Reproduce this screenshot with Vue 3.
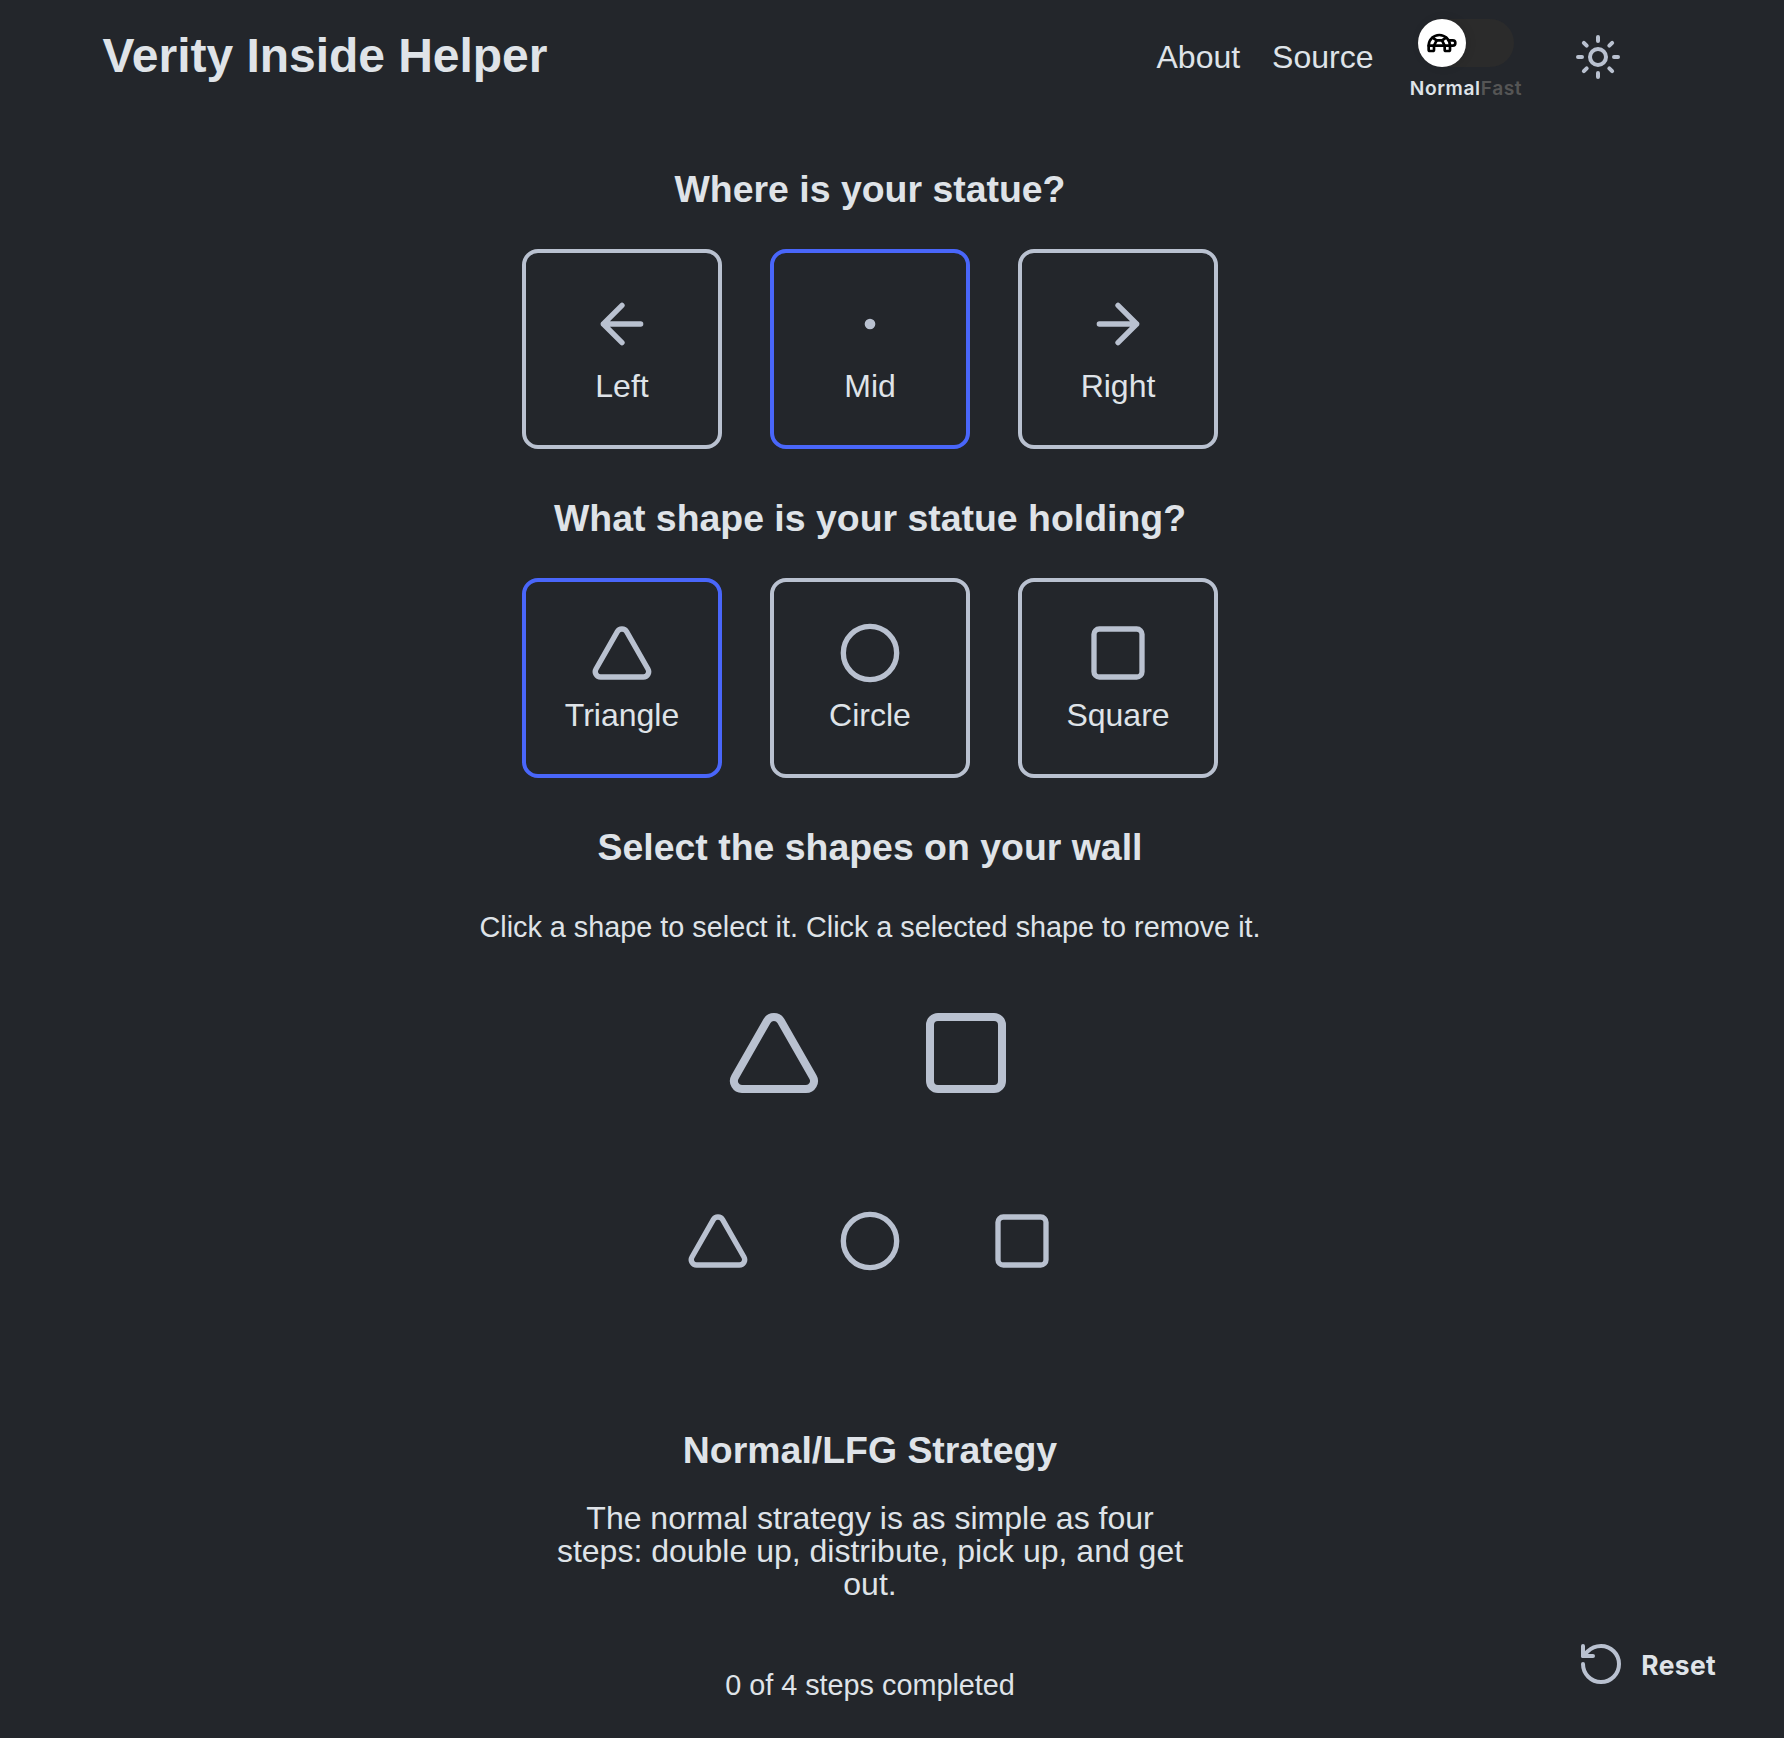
<script setup>
import { ref } from 'vue'

const positions = [
  { name: 'Left', icon: 'left' },
  { name: 'Mid', icon: 'dot' },
  { name: 'Right', icon: 'right' },
]
const shapes = [
  { name: 'Triangle', icon: 'triangle' },
  { name: 'Circle', icon: 'circle' },
  { name: 'Square', icon: 'square' },
]
const paths = {
  left: 'm12 19-7-7 7-7M19 12H5',
  right: 'M5 12h14m-7-7 7 7-7 7',
  dot: 'M11 12a1 1 0 1 0 2 0a1 1 0 1 0-2 0z',
  triangle: 'M13.73 4a2 2 0 0 0-3.48 0l-8 14A2 2 0 0 0 4 21h16a2 2 0 0 0 1.73-3Z',
  circle: 'M2 12a10 10 0 1 0 20 0a10 10 0 1 0-20 0z',
  square: 'M5 3h14a2 2 0 0 1 2 2v14a2 2 0 0 1-2 2H5a2 2 0 0 1-2-2V5a2 2 0 0 1 2-2z',
}
const position = ref('Mid')
const held = ref('Triangle')
const wall = ['triangle', 'square']
</script>

<template>
  <div class="page">
    <header class="header">
      <h1>Verity Inside Helper</h1>
      <nav class="nav">
        <a>About</a>
        <a>Source</a>
      </nav>
      <div class="speed">
        <div class="track">
          <div class="knob">
            <svg class="icon turtle" viewBox="0 0 24 24">
              <path d="m12 10 2 4v3a1 1 0 0 0 1 1h2a1 1 0 0 0 1-1v-3a8 8 0 1 0-16 0v3a1 1 0 0 0 1 1h2a1 1 0 0 0 1-1v-3l2-4h4Z" />
              <path d="M4.82 7.9 8 10M15.18 7.9 12 10M16.93 10H20a2 2 0 0 1 0 4H2" />
            </svg>
          </div>
        </div>
        <div class="labels"><span>Normal</span><span class="off">Fast</span></div>
      </div>
      <svg class="icon sun" viewBox="0 0 24 24">
        <circle cx="12" cy="12" r="4" />
        <path d="M12 2v2M12 20v2M4.93 4.93l1.41 1.41M17.66 17.66l1.41 1.41M2 12h2M20 12h2M6.34 17.66l-1.41 1.41M19.07 4.93l-1.41 1.41" />
      </svg>
    </header>

    <main>
      <section>
        <h2>Where is your statue?</h2>
        <div class="cards">
          <button v-for="p in positions" :key="p.name" class="card" :class="{ active: position === p.name }" @click="position = p.name">
            <svg class="icon small" viewBox="0 0 24 24"><path :d="paths[p.icon]" /></svg>
            <span>{{ p.name }}</span>
          </button>
        </div>
      </section>

      <section>
        <h2>What shape is your statue holding?</h2>
        <div class="cards">
          <button v-for="s in shapes" :key="s.name" class="card" :class="{ active: held === s.name }" @click="held = s.name">
            <svg class="icon small" viewBox="0 0 24 24"><path :d="paths[s.icon]" /></svg>
            <span>{{ s.name }}</span>
          </button>
        </div>
      </section>

      <section>
        <h2>Select the shapes on your wall</h2>
        <p class="hint">Click a shape to select it. Click a selected shape to remove it.</p>
        <div class="wall">
          <svg v-for="w in wall" :key="w" class="icon large" viewBox="0 0 24 24"><path :d="paths[w]" /></svg>
        </div>
        <div class="choices">
          <svg v-for="s in shapes" :key="s.name" class="icon small" viewBox="0 0 24 24"><path :d="paths[s.icon]" /></svg>
        </div>
      </section>

      <section class="strategy">
        <h2>Normal/LFG Strategy</h2>
        <p>The normal strategy is as simple as four steps: double up, distribute, pick up, and get out.</p>
      </section>
    </main>

    <footer class="footer">
      <p class="progress">0 of 4 steps completed</p>
      <button class="reset">
        <svg class="icon" viewBox="0 0 24 24">
          <path d="M3 12a9 9 0 1 0 9-9 9.75 9.75 0 0 0-6.74 2.74L3 8" />
          <path d="M3 3v5h5" />
        </svg>
        <span>Reset</span>
      </button>
    </footer>
  </div>
</template>

<style>
body {
  margin: 0;
  background: #23262b;
}
</style>

<style scoped>
.page {
  box-sizing: border-box;
  width: 1740px;
  height: 1738px;
  font-family: "Liberation Sans", Helvetica, Arial, sans-serif;
  font-size: 32px;
  color: #dfe3e8;
}
h1, h2, p {
  margin: 0;
}
button {
  padding: 0;
  border: 0;
  background: none;
  color: inherit;
  font: inherit;
}
.icon {
  display: block;
  flex: none;
  width: 48px;
  height: 48px;
  fill: none;
  stroke: #b9c1d0;
  stroke-width: 2;
  stroke-linecap: round;
  stroke-linejoin: round;
}
.icon.small {
  width: 64px;
  height: 64px;
}
.icon.large {
  width: 96px;
  height: 96px;
}
.header {
  display: flex;
  align-items: flex-start;
  box-sizing: border-box;
  height: 120px;
  padding: 19px 118px 0 102.5px;
}
h1 {
  margin-top: 9px;
  font-size: 48px;
  line-height: 56px;
  letter-spacing: -0.03px;
}
.nav {
  display: flex;
  gap: 32px;
  margin-top: 20px;
  margin-left: auto;
  line-height: 36px;
}
.speed {
  display: flex;
  flex-direction: column;
  align-items: center;
  width: 120px;
  margin-left: 32.5px;
}
.track {
  width: 96px;
  height: 48px;
  border-radius: 24px;
  background: #2b2b2b;
}
.knob {
  display: flex;
  align-items: center;
  justify-content: center;
  width: 48px;
  height: 48px;
  border-radius: 50%;
  background: #fff;
  box-shadow: 2px 0 10px rgba(0, 0, 0, 0.1);
}
.icon.turtle {
  width: 32px;
  height: 32px;
  stroke: #000;
}
.labels {
  margin-top: 9px;
  font: 600 19.2px/24px Inter, sans-serif;
  letter-spacing: 0.58px;
}
.off {
  color: #555;
}
.sun {
  margin-top: 14px;
  margin-left: 48px;
}
section {
  display: flex;
  flex-direction: column;
  align-items: center;
  padding-top: 47px;
}
h2 {
  font-size: 37.44px;
  line-height: 44px;
}
.cards {
  display: flex;
  gap: 48px;
  margin-top: 38px;
}
.card {
  display: flex;
  flex-direction: column;
  align-items: center;
  gap: 12px;
  box-sizing: border-box;
  width: 200px;
  height: 200px;
  padding-top: 39px;
  border: 4px solid #b9c1d0;
  border-radius: 16px;
  line-height: 36px;
}
.card.active {
  border-color: #4966fa;
}
.hint {
  margin-top: 41px;
  font-size: 28.8px;
  line-height: 34px;
}
.wall {
  display: flex;
  gap: 96px;
  margin-top: 61px;
}
.choices {
  display: flex;
  gap: 88px;
  margin-top: 108px;
}
.strategy {
  padding-top: 155px;
}
.strategy p {
  width: 640px;
  margin-top: 30px;
  line-height: 33px;
  text-align: center;
}
.footer {
  display: grid;
  grid-template-columns: 1fr auto 1fr;
  height: 62px;
  margin-top: 39px;
}
.progress {
  grid-column: 2;
  align-self: end;
  font-size: 28.8px;
  line-height: 34px;
}
.reset {
  display: flex;
  align-items: center;
  justify-self: end;
  align-self: start;
  gap: 16.5px;
  height: 48px;
  margin-right: 24px;
  font: 700 26.4px/48px Inter, sans-serif;
  letter-spacing: 0.35px;
}
.reset span {
  padding-top: 1px;
}
</style>
